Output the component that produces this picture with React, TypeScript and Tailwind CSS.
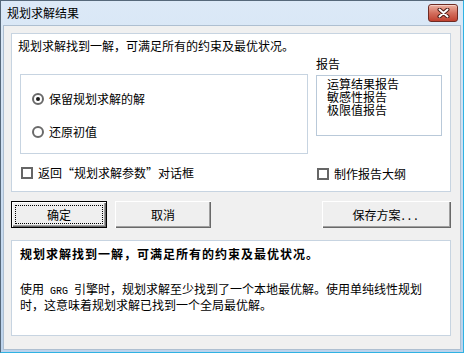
import { FC, ReactNode } from 'react'

const Radio: FC<{ checked?: boolean; label: string }> = ({ checked, label }) => (
	<div className="flex items-center gap-[5px] h-[12px]">
		<span className="flex items-center justify-center w-[12px] h-[12px] rounded-full border-2 border-[#6a6a6a] bg-white">
			{checked && <span className="w-[4px] h-[4px] rounded-full bg-[#1a1a1a]" />}
		</span>
		<span className="leading-[12px]">{label}</span>
	</div>
)

const Check: FC<{ label: string }> = ({ label }) => (
	<div className="flex items-center gap-[5px] h-[12px]">
		<span className="w-[12px] h-[12px] border-2 border-[#666666] bg-white" />
		<span className="leading-[12px]">{label}</span>
	</div>
)

const Btn: FC<{ className?: string; children: ReactNode; focused?: boolean }> = ({ className, children, focused }) => (
	<button
		className={
			'relative h-[27px] flex items-center justify-center bg-[#efefef] leading-[12px] ' +
			(focused
				? 'border border-black shadow-[inset_1px_1px_0_#ffffff,inset_-1px_-1px_0_#696969,inset_-2px_-2px_0_#a0a0a0] '
				: 'shadow-[inset_1px_1px_0_#ffffff,inset_-1px_-1px_0_#696969,inset_-2px_-2px_0_#a0a0a0] ') +
			(className ?? '')
		}
	>
		{focused && <span className="absolute inset-[3px] border border-dotted border-black" />}
		{children}
	</button>
)

const App: FC = () => {
	return (
		<div className="w-[464px] h-[353px] flex flex-col overflow-hidden bg-gradient-to-b from-[#dce9f7] to-[#bcd3ec] border border-[#56687a] border-r-[#2fb2e3] border-b-[#2fb2e3] text-[12px] text-black font-['Noto_Sans_CJK_SC',sans-serif]">
			{/* title bar */}
			<div className="h-[24px] flex items-center justify-between pl-[6px] pr-[5px]">
				<span className="leading-[12px] text-[12px]">规划求解结果</span>
				<div className="w-[30px] h-[18px] rounded-[3px] border border-[#6e2b24] bg-gradient-to-b from-[#eab1a3] via-[#d36f5e] to-[#c0402f] shadow-[inset_0_1px_0_#f6d0c6] flex items-center justify-center">
					<svg width="13" height="10" viewBox="0 0 13 10">
						<path d="M2.5 1.5 L10.5 8.5 M10.5 1.5 L2.5 8.5" stroke="#4a1a14" strokeWidth="4" strokeLinecap="round" />
						<path d="M2.5 1.5 L10.5 8.5 M10.5 1.5 L2.5 8.5" stroke="#ffffff" strokeWidth="2" strokeLinecap="round" />
					</svg>
				</div>
			</div>

			{/* dialog body */}
			<div className="flex-1 mx-[2px] mb-[2px] bg-[#f0f0f0] border border-[#aebfd1] pl-[7px] pt-[7px]">
				{/* top panel */}
				<div className="w-[440px] h-[159px] bg-white border border-[#c7d4e1]">
					<div className="mt-[6px] ml-[6px] leading-[12px]">规划求解找到一解，可满足所有的约束及最优状况。</div>
					<div className="flex mt-[6px]">
						<div className="ml-[8px] w-[288px] pt-[16px]">
							<div className="h-[80px] border border-[#c7d4e1] pl-[11px] pt-[18px] flex flex-col gap-[21px]">
								<Radio checked label="保留规划求解的解" />
								<Radio label="还原初值" />
							</div>
							<div className="mt-[13px] ml-[1px]">
								<Check label="返回“规划求解参数”对话框" />
							</div>
						</div>
						<div className="ml-[8px] w-[126px]">
							<div className="leading-[12px]">报告</div>
							<div className="mt-[5px] h-[61px] border border-[#b9c9d9] pl-[10px] pt-[1px] leading-[13px]">
								<div>运算结果报告</div>
								<div>敏感性报告</div>
								<div>极限值报告</div>
							</div>
							<div className="mt-[32px] ml-[1px]">
								<Check label="制作报告大纲" />
							</div>
						</div>
					</div>
				</div>

				{/* buttons */}
				<div className="w-[440px] mt-[9px] flex items-center">
					<Btn focused className="w-[96px]">确定</Btn>
					<Btn className="w-[96px] ml-[8px]">取消</Btn>
					<Btn className="w-[129px] ml-auto">
						保存方案<span className="tracking-[3px] ml-[1px]">...</span>
					</Btn>
				</div>

				{/* bottom panel */}
				<div className="w-[440px] h-[96px] mt-[12px] bg-white border border-[#c7d4e1] pl-[8px] pt-[7px]">
					<div className="font-bold leading-[12px] tracking-[1px]">规划求解找到一解，可满足所有的约束及最优状况。</div>
					<div className="mt-[22px] leading-[13px]">
						使用<span className="inline-block w-[30px] text-center font-['Liberation_Mono',monospace] text-[10px]">GRG</span>引擎时，规划求解至少找到了一个本地最优解。使用单纯线性规划
						<br />
						时，这意味着规划求解已找到一个全局最优解。
					</div>
				</div>
			</div>
		</div>
	)
}

export default App
